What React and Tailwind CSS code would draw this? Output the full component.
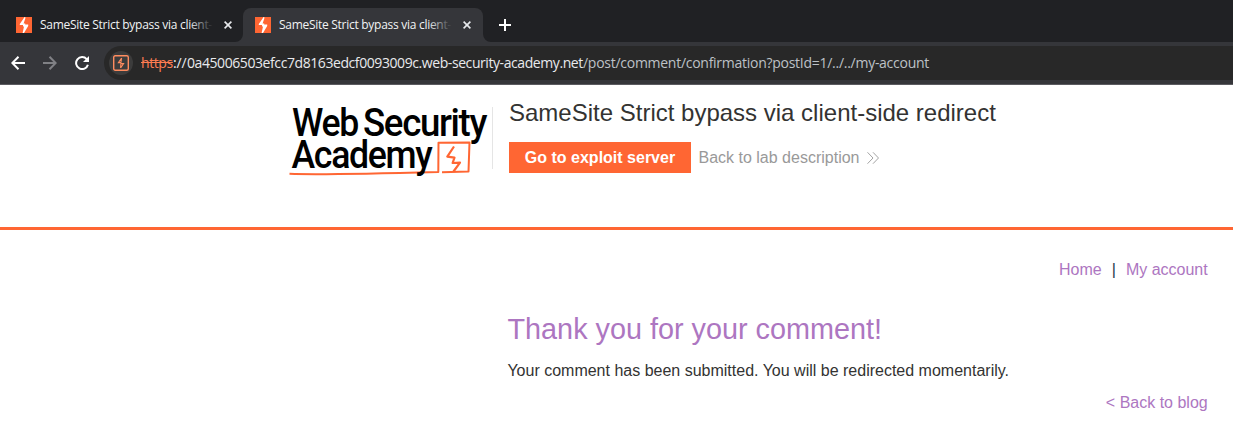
import React from "react";

function Favicon() {
  return (
    <svg className="h-4 w-4 shrink-0" viewBox="0 0 16 16">
      <rect width="16" height="16" fill="#ff6633" />
      <path d="M8.6 0 L3.8 6.9 V8 H7 V9.6 H8 L6.6 16 H8 L12.2 9 V7.6 H9.2 V6.4 H7.6 L9.3 1.5 V0 Z" fill="#fff" />
    </svg>
  );
}

function CloseIcon() {
  return (
    <svg className="h-2 w-2 shrink-0" viewBox="0 0 8 8" stroke="#e8eaed" strokeWidth="1.6">
      <path d="M0.6 0.6 L7.4 7.4 M7.4 0.6 L0.6 7.4" />
    </svg>
  );
}

function Tab({ fade }) {
  return (
    <>
      <Favicon />
      <div className="relative ml-2 w-[173px] whitespace-nowrap font-['Open_Sans','Noto_Sans',sans-serif] text-[12px] leading-4 tracking-[-0.28px] text-[#f1f3f4]">
        SameSite Strict bypass via client-
        <div className={"absolute inset-y-0 right-0 w-6 bg-linear-to-r from-transparent " + fade} />
      </div>
    </>
  );
}

function TabStrip() {
  return (
    <div className="flex h-[42px] bg-[#202124]">
      <div className="mt-2 flex h-[34px] w-[243px] items-center pl-4">
        <Tab fade="to-[#202124]" />
        <div className="ml-[11px]"><CloseIcon /></div>
      </div>
      <div className="relative mt-2 flex h-[34px] w-[240px] items-center rounded-t-lg bg-[#35363a] pl-3">
        <Tab fade="to-[#35363a]" />
        <div className="ml-[11px]"><CloseIcon /></div>
        <svg className="absolute bottom-0 -left-2 h-2 w-2" viewBox="0 0 8 8"><path d="M8 0 A8 8 0 0 1 0 8 H8 Z" fill="#35363a" /></svg>
        <svg className="absolute -right-2 bottom-0 h-2 w-2" viewBox="0 0 8 8"><path d="M0 0 A8 8 0 0 0 8 8 H0 Z" fill="#35363a" /></svg>
      </div>
      <svg className="mt-[19px] ml-4 h-3 w-3" viewBox="0 0 12 12" stroke="#fff" strokeWidth="2">
        <path d="M0 6 H12 M6 0 V12" />
      </svg>
    </div>
  );
}

function Toolbar() {
  return (
    <div className="flex h-[43px] items-start border-b border-[#5b5b60] bg-[#35363a] pt-1">
      <div className="flex h-[34px] w-[104px] shrink-0 items-center pl-[11px]">
        <svg className="h-[14px] w-[14px]" viewBox="0 0 14 14" fill="none" stroke="#fff" strokeWidth="2">
          <path d="M14 7 H1.5 M7.5 0.8 L1.3 7 L7.5 13.2" />
        </svg>
        <svg className="ml-[18px] h-[14px] w-[14px]" viewBox="0 0 14 14" fill="none" stroke="#808185" strokeWidth="2">
          <path d="M0 7 H12.5 M6.5 0.8 L12.7 7 L6.5 13.2" />
        </svg>
        <svg className="ml-[18px] h-[14px] w-[14px]" viewBox="0 0 14 14" fill="none" stroke="#fff" strokeWidth="2">
          <path d="M11.7 3.2 A6 6 0 1 0 12.9 8.7" />
          <path d="M14 0 V6 H8 Z" fill="#fff" stroke="none" />
        </svg>
      </div>
      <div className="flex h-[34px] flex-1 items-center rounded-l-full bg-[#282828] pl-[5px]">
        <div className="flex h-6 w-6 shrink-0 items-center justify-center rounded-full bg-[#3c3c3c]">
          <svg className="h-4 w-4" viewBox="0 0 16 16" fill="none" stroke="#ff8c5f">
            <rect x="0.7" y="0.7" width="14.6" height="14.6" rx="1.5" strokeWidth="1.4" />
            <path d="M8.6 3 L5.4 7.6 H7.9 V8.6 H10.6 L7.6 13 M8.6 3 L7.9 7.6 M7.9 8.6 L7.6 13" strokeWidth="1.1" />
          </svg>
        </div>
        <div className="ml-2 flex whitespace-nowrap font-['Open_Sans','Noto_Sans',sans-serif] text-[14px] leading-5 text-[#e8eaed]">
          <span className="w-[32px] tracking-[-0.4px] text-[#ff7d52] line-through">https</span>
          <span className="w-[14px] tracking-[-0.1px]">://</span>
          <span className="w-[396px] tracking-[-0.42px]">0a45006503efcc7d8163edcf0093009c.web-security-academy.net</span>
          <span className="tracking-[-0.27px] text-[#bdc1c6]">/post/comment/confirmation?postId=1/../../my-account</span>
        </div>
      </div>
    </div>
  );
}

function Logo() {
  return (
    <svg className="h-[76px] w-[204px]" viewBox="288 104 204 76">
      <g fill="none" stroke="#ff6633" strokeLinejoin="round">
        <path d="M289.5 173.8 C320 175 370 173.8 438.3 172 L438.5 142.8 L469.5 142.5 L468.5 171.5 L442 172.2" strokeWidth="2" />
        <path d="M454 146.5 L447.3 156.6 L454.5 157.6 L452.6 163 L460 162.6 L453.5 171.5" strokeWidth="2.2" />
      </g>
      <g fill="#000" fontFamily="Roboto, sans-serif" fontWeight="500" fontSize="38" letterSpacing="-1.4">
        <text x="292" y="135.8" textLength="66" lengthAdjust="spacingAndGlyphs">Web</text>
        <text x="363" y="135.8" textLength="123" lengthAdjust="spacingAndGlyphs">Security</text>
        <text x="291.5" y="168" textLength="140" lengthAdjust="spacingAndGlyphs">Academy</text>
      </g>
    </svg>
  );
}

function LabHeader() {
  return (
    <header className="flex h-[145px] border-b-3 border-[#ff6633] pt-[19px] pl-[288px]">
      <Logo />
      <div className="mt-[3px] h-[62px] w-px bg-[#e5e5e5]" />
      <div className="-mt-[5px] ml-4">
        <h2 className="text-[24px] leading-[28px] text-[#333332]">SameSite Strict bypass via client-side redirect</h2>
        <div className="mt-[15px] flex h-[31px] items-center text-[16px]">
          <a className="flex h-[31px] w-[182px] items-center justify-center bg-[#ff6633] font-bold text-white">Go to exploit server</a>
          <a className="ml-[7.5px] text-[#999999]">Back to lab description</a>
          <svg className="ml-2 h-3 w-3" viewBox="0 0 12 12" fill="none" stroke="#999" strokeWidth="0.9">
            <path d="M0.5 0.3 L6 6 L0.5 11.7 M6 0.3 L11.5 6 L6 11.7" />
          </svg>
        </div>
      </div>
    </header>
  );
}

export default function App() {
  return (
    <div className="h-[436px] overflow-hidden bg-white font-['Liberation_Sans',Arial,sans-serif] text-[16px] text-[#333332]">
      <TabStrip />
      <Toolbar />
      <LabHeader />
      <main className="pr-[25.3px] leading-6">
        <nav className="mt-[28px] flex justify-end text-[#ad76c1]">
          <a>Home</a>
          <span className="mx-[10px] text-[#1b3a4a]">|</span>
          <a>My account</a>
        </nav>
        <h1 className="mt-[29px] ml-[507.5px] text-[28.8px] leading-9 text-[#ad76c1]">Thank you for your comment!</h1>
        <p className="mt-[12px] ml-[507.4px]">Your comment has been submitted. You will be redirected momentarily.</p>
        <div className="mt-2 text-right text-[#ad76c1]">&lt; Back to blog</div>
      </main>
    </div>
  );
}
